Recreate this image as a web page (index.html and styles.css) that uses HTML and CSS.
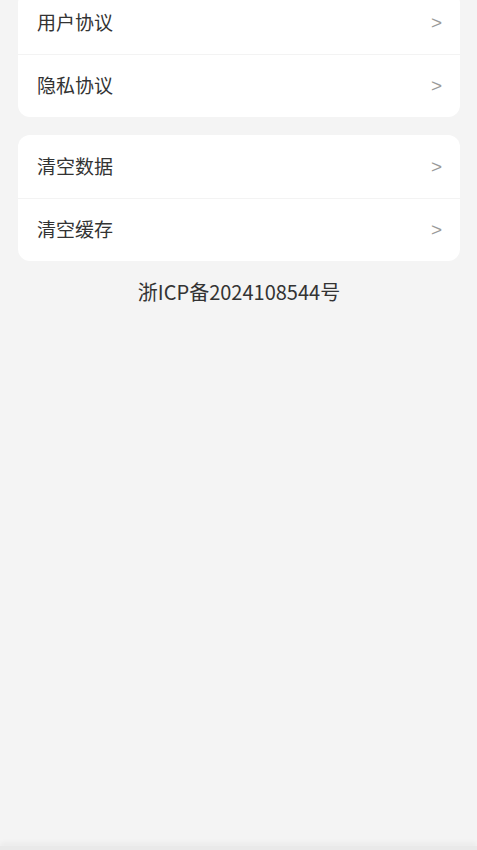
FILE: index.html
```html
<!DOCTYPE html>
<html lang="zh-CN">
<head>
<meta charset="utf-8">
<title>设置</title>
<link rel="stylesheet" href="styles.css">
</head>
<body>
<div class="page">
  <div class="content">
    <div class="card card-first">
      <div class="row"><span class="label">用户协议</span><span class="arrow">&gt;</span></div>
      <div class="row"><span class="label">隐私协议</span><span class="arrow">&gt;</span></div>
    </div>
    <div class="card">
      <div class="row"><span class="label">清空数据</span><span class="arrow">&gt;</span></div>
      <div class="row"><span class="label">清空缓存</span><span class="arrow">&gt;</span></div>
    </div>
    <div class="icp">浙ICP备2024108544号</div>
  </div>
  <div class="bottom-bar"></div>
</div>
</body>
</html>
```
FILE: styles.css
```css
html, body {
  margin: 0;
  padding: 0;
  background: #f4f4f4;
}
body {
  font-family: "Noto Sans CJK SC", "Noto Sans", sans-serif;
  color: #333;
}
.page {
  height: 850px;
  display: flex;
  flex-direction: column;
  overflow: hidden;
}
.content {
  flex: 1;
  padding: 0 17px 0 18px;
  display: flex;
  flex-direction: column;
  gap: 18px;
}
.card {
  background: #fff;
  border-radius: 12px;
  overflow: hidden;
}
.card-first {
  margin-top: -9px;
}
.row {
  height: 63px;
  display: flex;
  align-items: center;
  justify-content: space-between;
  padding: 0 18px 0 19px;
  box-sizing: border-box;
}
.row + .row {
  border-top: 1px solid #f3f3f3;
}
.label {
  font-size: 19px;
  color: #333;
  line-height: 24px;
  position: relative;
  top: -1px;
}
.arrow {
  font-family: "Liberation Sans", sans-serif;
  font-size: 19px;
  line-height: 24px;
  color: #9a9a9a;
}
.icp {
  text-align: center;
  font-size: 20px;
  color: #333;
  line-height: 26px;
}
.bottom-bar {
  height: 4px;
  background: #e9e9e9;
  box-shadow: 0 -3px 5px rgba(0, 0, 0, 0.05);
}
```
